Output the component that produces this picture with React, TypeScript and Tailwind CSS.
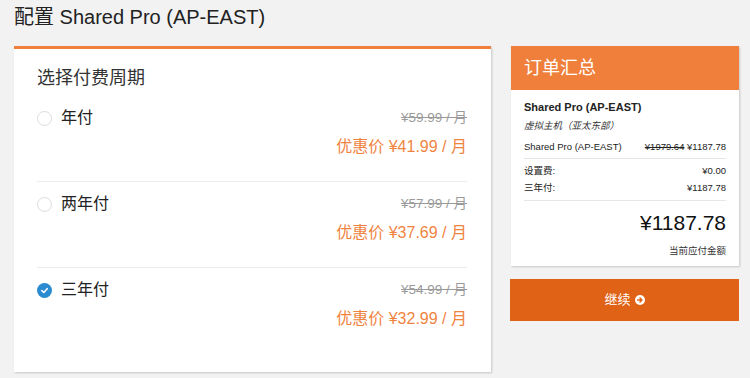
import React from 'react';

const cycles = [
  { label: '年付', original: '¥59.99 / 月', price: '¥41.99 / 月', checked: false },
  { label: '两年付', original: '¥57.99 / 月', price: '¥37.69 / 月', checked: false },
  { label: '三年付', original: '¥54.99 / 月', price: '¥32.99 / 月', checked: true },
];

const Radio: React.FC<{ checked: boolean }> = ({ checked }) =>
  checked ? (
    <span className="flex h-[15px] w-[15px] items-center justify-center rounded-full bg-[#2a8bd1]">
      <svg width="9" height="9" viewBox="0 0 10 10" fill="none">
        <path d="M2 5.2 L4.2 7.2 L8 3" stroke="white" strokeWidth="1.8" strokeLinecap="round" strokeLinejoin="round" />
      </svg>
    </span>
  ) : (
    <span className="block h-[15px] w-[15px] rounded-full border border-[#dcdcdc] bg-white" />
  );

const App: React.FC = () => {
  return (
    <div
      className="min-h-screen bg-[#f2f2f2] pl-[14px] pr-[11px] pt-[3px] text-[#333]"
      style={{ fontFamily: '"Liberation Sans", "Noto Sans CJK SC", sans-serif' }}
    >
      <h1 className="text-[20px] leading-[28px] font-normal text-[#222]">配置 Shared Pro (AP-EAST)</h1>

      <div className="mt-[15px] flex items-start gap-[19px]">
        {/* billing cycle card */}
        <div className="w-[477px] shrink-0 border-t-[3px] border-[#f0803c] bg-white pl-[23px] pr-[24px] pb-[19px] pt-[17px] shadow-[1px_1px_2px_rgba(0,0,0,0.18)]">
          <h2 className="text-[18px] leading-[24px] text-[#333]">选择付费周期</h2>
          <div className="mt-[6px]">
            {cycles.map((c, i) => (
              <div
                key={c.label}
                className={`pb-[22px] pt-[12px] ${i < cycles.length - 1 ? 'border-b border-[#ececec]' : ''}`}
              >
                <div className="flex h-[20px] items-center justify-between">
                  <div className="flex items-center gap-[9px]">
                    <Radio checked={c.checked} />
                    <span className="text-[16px] leading-[20px] text-[#222]">{c.label}</span>
                  </div>
                  <span className="text-[13.5px] leading-[20px] text-[#9a9a9a] line-through">{c.original}</span>
                </div>
                <div className="mt-[7px] flex h-[24px] items-center justify-end text-[16px] leading-[24px] text-[#f0843f]">
                  优惠价 {c.price}
                </div>
              </div>
            ))}
          </div>
        </div>

        {/* order summary */}
        <div className="w-[229px] shrink-0">
          <div className="ml-px bg-white shadow-[1px_1px_2px_rgba(0,0,0,0.18)]">
            <div className="flex h-[44px] items-center bg-[#ef7f3b] px-[13px] text-[18px] text-white">订单汇总</div>
            <div className="px-[13px] pb-[8px] pt-[10px] text-[#222]">
              <div className="text-[11px] font-bold leading-[14px]">Shared Pro (AP-EAST)</div>
              <div className="mt-[5px] text-[9.5px] italic leading-[14px] text-[#333]">虚拟主机（亚太东部）</div>
              <div className="mt-[7px] flex justify-between border-b border-[#e6e6e6] pb-[4px] text-[9.5px] leading-[14px]">
                <span>Shared Pro (AP-EAST)</span>
                <span>
                  <span className="line-through">¥1979.64</span> ¥1187.78
                </span>
              </div>
              <div className="mt-[5px] flex justify-between text-[9.5px] leading-[14px]">
                <span>设置费:</span>
                <span>¥0.00</span>
              </div>
              <div className="mt-[3px] flex justify-between border-b border-[#e6e6e6] pb-[5px] text-[9.5px] leading-[14px]">
                <span>三年付:</span>
                <span>¥1187.78</span>
              </div>
              <div className="mt-[9px] text-right text-[21px] leading-[26px] text-[#111]">¥1187.78</div>
              <div className="mt-[8px] text-right text-[9.5px] leading-[14px] text-[#333]">当前应付金额</div>
            </div>
          </div>
          <button className="mt-[13px] flex h-[42px] w-full items-center justify-center gap-[4px] bg-[#e06216] text-[13px] text-white">
            继续
            <svg width="10" height="10" viewBox="0 0 10 10">
              <circle cx="5" cy="5" r="5" fill="white" />
              <path d="M2.6 5 H7 M5 3 L7 5 L5 7" stroke="#e06216" strokeWidth="1.5" fill="none" strokeLinecap="round" strokeLinejoin="round" />
            </svg>
          </button>
        </div>
      </div>
    </div>
  );
};

export default App;
